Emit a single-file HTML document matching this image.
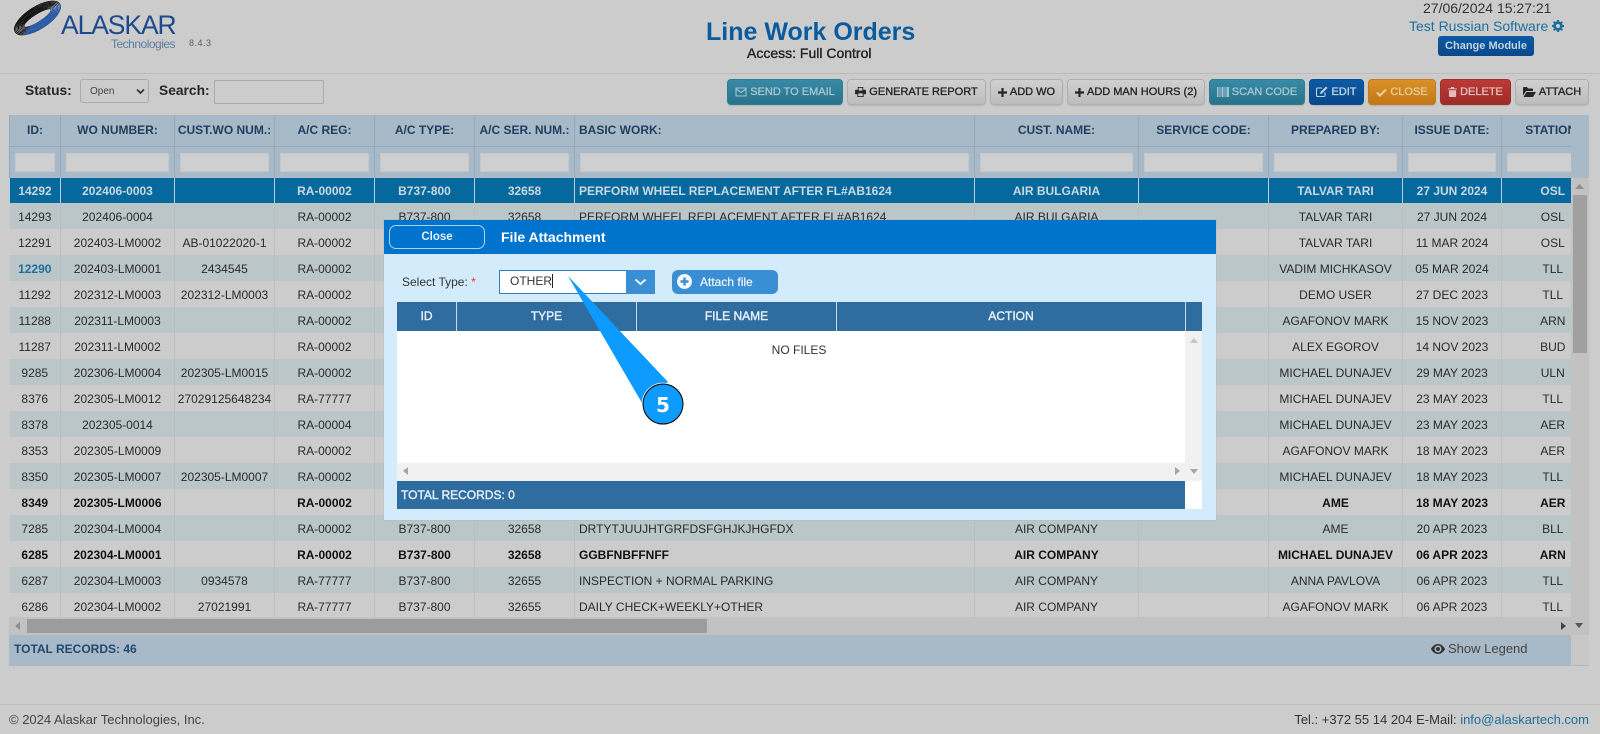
<!DOCTYPE html>
<html lang="en">
<head>
<meta charset="utf-8">
<title>Line Work Orders</title>
<style>
html,body{margin:0;padding:0}
body{width:1600px;height:734px;position:relative;overflow:hidden;background:#cccccc;font-family:"Liberation Sans",Arial,sans-serif;font-size:12px;color:#2a2a2a}
.a{position:absolute;white-space:nowrap}
.line{position:absolute;left:0;width:1600px;height:1px;background:#bdbdbd}
.btn{position:absolute;top:79px;height:26px;box-sizing:border-box;border:1px solid #b0b0b0;border-radius:4px;background:linear-gradient(#d0d0d0,#bdbdbd);color:#262626;font-size:11px;line-height:24px;text-align:center;white-space:nowrap;-webkit-text-stroke:.35px currentColor;box-shadow:0 1px 1px rgba(0,0,0,.12)}
.btn svg{vertical-align:-2px;margin-right:3px}
.teal{background:linear-gradient(#388aa6,#29738b);border-color:#2f7d96;color:#a3c4d0}
.blue{background:linear-gradient(#0b5aa4,#09488a);border-color:#094c8f;color:#c2d2e2}
.orange{background:linear-gradient(#dc9028,#c27816);border-color:#c27c1a;color:#e8cc96}
.red{background:linear-gradient(#bc3a36,#9c2b27);border-color:#a02e2a;color:#e4bdbb}
#tw{position:absolute;left:9px;top:115px;width:1562px;height:502px;overflow:hidden}
table{border-collapse:collapse;table-layout:fixed}
#t{width:1594px}
#t td,#t th{box-sizing:border-box;padding:0;text-align:center;white-space:nowrap;overflow:hidden;border-left:1px solid #bdbdbd;font-weight:normal;font-size:12px}
#t td:first-child,#t th:first-child{border-left:0}
#t .h th{height:31px;background:#a8b9c7;color:#1f3f60;font-weight:bold;border-left:1px solid #93a9bc;border-bottom:1px solid #93a9bc}
#t .f th{height:32px;background:#a8b9c7;border-left:1px solid #93a9bc;vertical-align:middle}
#t .f i{display:block;height:19px;margin:0 5px 0 5px;background:#cfcfcf;border:1px solid #c4c9cd;box-sizing:border-box}
#t tr.r td{height:26px;background:#cccccc;padding-top:2px}
#t tr.r:nth-child(even) td{background:#bac6c8}
#t tr.s td{height:25px;background:#05699e;color:#cbd8e1;font-weight:bold;border-left:1px solid #b9cfdc}
#t tr.b td{font-weight:bold;color:#111}
#t td.l{text-align:left;padding-left:4px}
.mt{position:absolute;top:302px;height:29px;line-height:28px;text-align:center;color:#e6f0f8;font-size:12px;-webkit-text-stroke:.4px #e6f0f8;box-sizing:border-box}
</style>
</head>
<body>

<!-- logo -->
<svg class="a" style="left:10px;top:0" width="56" height="38" viewBox="0 0 56 38">
<defs><linearGradient id="lg" x1="0.3" y1="0" x2="0.7" y2="1"><stop offset="0" stop-color="#000"/><stop offset=".56" stop-color="#1a1a1a"/><stop offset=".7" stop-color="#1b4f9c"/><stop offset="1" stop-color="#1b4f9c"/></linearGradient></defs>
<g fill="none" stroke="url(#lg)" stroke-width=".95" transform="rotate(-32.500 27.500 18)">
<ellipse cx="27.500" cy="18" rx="16" ry="4"/>
<ellipse cx="27.500" cy="18" rx="17.500" ry="5"/>
<ellipse cx="27.500" cy="18" rx="19" ry="6"/>
<ellipse cx="27.500" cy="18" rx="20.500" ry="7"/>
<ellipse cx="27.500" cy="18" rx="22" ry="8"/>
<ellipse cx="27.500" cy="18" rx="23.500" ry="9"/>
<ellipse cx="27.500" cy="18" rx="25" ry="10"/>
<ellipse cx="27.500" cy="18" rx="26.300" ry="11"/>
</g>
</svg>
<div class="a" style="left:61px;top:10px;font-size:26.500px;line-height:30px;color:#1d4a8c;letter-spacing:-1.100px">ALASKAR</div>
<div class="a" style="left:111px;top:37px;font-size:12px;line-height:14px;color:#5f7ca0;letter-spacing:-.5px">Technologies</div>
<div class="a" style="left:189px;top:37px;font-size:9px;line-height:12px;color:#5e5e5e;letter-spacing:.5px">8.4.3</div>

<!-- title -->
<div class="a" style="left:706px;top:17px;font-size:25px;line-height:30px;font-weight:bold;color:#0a5a9e">Line Work Orders</div>
<div class="a" style="left:747px;top:45px;font-size:14px;line-height:16px;color:#222;-webkit-text-stroke:.35px #222">Access: Full Control</div>

<!-- top right -->
<div class="a" style="left:1423px;top:0;font-size:14px;line-height:16px;color:#333">27/06/2024 15:27:21</div>
<div class="a" style="left:1409px;top:18px;font-size:14px;line-height:16px;color:#1f6f9e">Test Russian Software</div>
<svg class="a" style="left:1552px;top:20px" width="12" height="12" viewBox="0 0 12 12"><path fill="#1f6f9e" fill-rule="evenodd" d="M5 0h2l.3 1.600 1.100.5L9.800 1.200l1.100 1.100-.9 1.400.5 1.100L12 5v2l-1.500.3-.5 1.100.9 1.400-1.100 1.100-1.400-.9-1.100.5L7 12H5l-.3-1.500-1.100-.5-1.400.9-1.100-1.100.9-1.400-.5-1.100L0 7V5l1.500-.3.5-1.100-.9-1.400 1.100-1.100 1.400.9 1.100-.5zM6 4a2 2 0 1 0 0 4 2 2 0 0 0 0-4z"/></svg>
<div class="a" style="left:1438px;top:36px;width:96px;height:20px;border-radius:3px;background:linear-gradient(#0b5aa4,#09488a);color:#c4d3e3;font-size:11px;font-weight:bold;line-height:20px;text-align:center">Change Module</div>

<div class="line" style="top:73px"></div>

<!-- toolbar -->
<div class="a" style="left:25px;top:84px;font-size:13.800px;line-height:14px;font-weight:bold;color:#262626">Status:</div>
<div class="a" style="left:80px;top:79px;width:69px;height:24px;box-sizing:border-box;border:1px solid #ababab;border-radius:3px;font-size:10px;line-height:24px;padding-left:9px;color:#444">Open
<svg class="a" style="left:55px;top:8px" width="9" height="7" viewBox="0 0 9 7"><path d="M1 1.500l3.500 3.500L8 1.500" fill="none" stroke="#333" stroke-width="1.700"/></svg></div>
<div class="a" style="left:159px;top:84px;font-size:13.800px;line-height:14px;font-weight:bold;color:#262626">Search:</div>
<div class="a" style="left:214px;top:80px;width:110px;height:24px;box-sizing:border-box;border:1px solid #ababab;border-radius:2px"></div>

<div class="btn teal" style="left:727px;width:116px"><svg width="12" height="10" viewBox="0 0 12 10"><path d="M1 1h10v8H1zM1 2l5 3.500L11 2" fill="none" stroke="currentColor" stroke-width="1.100"/></svg>SEND TO EMAIL</div>
<div class="btn" style="left:847px;width:139px"><svg width="11" height="10" viewBox="0 0 12 11"><path fill="#262626" fill-rule="evenodd" d="M3 0h6v3h2a1 1 0 0 1 1 1v4H9.500v3h-7V8H0V4a1 1 0 0 1 1-1h2zm1 1v3h4V1zM3.500 7v3h5V7z"/></svg>GENERATE REPORT</div>
<div class="btn" style="left:990px;width:73px"><svg width="9" height="9" viewBox="0 0 10 10"><path fill="#262626" d="M3.800 0h2.400v3.800H10v2.400H6.200V10H3.800V6.200H0V3.800h3.800z"/></svg>ADD WO</div>
<div class="btn" style="left:1067px;width:138px"><svg width="9" height="9" viewBox="0 0 10 10"><path fill="#262626" d="M3.800 0h2.400v3.800H10v2.400H6.200V10H3.800V6.200H0V3.800h3.800z"/></svg>ADD MAN HOURS (2)</div>
<div class="btn teal" style="left:1209px;width:96px"><svg width="12" height="10" viewBox="0 0 12 10"><path fill="currentColor" d="M0 0h1.500v10H0zM2.500 0h1v10h-1zM4.500 0h2v10h-2zM7.500 0h1v10h-1zM9.500 0H12v10H9.500z"/></svg>SCAN CODE</div>
<div class="btn blue" style="left:1309px;width:55px"><svg width="12" height="11" viewBox="0 0 12 11"><path fill="none" stroke="currentColor" stroke-width="1.100" d="M9 6.500V9.500a1 1 0 0 1-1 1H1.500a1 1 0 0 1-1-1V3a1 1 0 0 1 1-1H6"/><path fill="currentColor" d="M10 .5 11.500 2 6 7.500 4 8l.5-2z"/></svg>EDIT</div>
<div class="btn orange" style="left:1368px;width:68px"><svg width="11" height="9" viewBox="0 0 11 9"><path d="M1 4.500l3 3L10 1.500" fill="none" stroke="currentColor" stroke-width="2.200"/></svg>CLOSE</div>
<div class="btn red" style="left:1440px;width:71px"><svg width="9" height="10" viewBox="0 0 10 11"><path fill="currentColor" d="M3.500 0h3l.5 1.500h3v1H0v-1h3zM1 3.500h8V10a1 1 0 0 1-1 1H2a1 1 0 0 1-1-1z"/></svg>DELETE</div>
<div class="btn" style="left:1515px;width:74px"><svg width="13" height="10" viewBox="0 0 13 10"><path fill="#262626" d="M0 1a1 1 0 0 1 1-1h3l1 1.500h4a1 1 0 0 1 1 1V4H3L0 8.500zM3.500 5H13l-3 5H.5z"/></svg>ATTACH</div>

<!-- main grid -->
<div class="a" style="left:1571px;top:115px;width:18px;height:63px;background:#a8b9c7"></div>
<div id="tw">
<table id="t">
<colgroup><col style="width:51px"><col style="width:114px"><col style="width:100px"><col style="width:100px"><col style="width:100px"><col style="width:100px"><col style="width:400px"><col style="width:164px"><col style="width:130px"><col style="width:134px"><col style="width:99px"><col style="width:102px"></colgroup>
<thead>
<tr class="h"><th>ID:</th><th>WO NUMBER:</th><th>CUST.WO NUM.:</th><th>A/C REG:</th><th>A/C TYPE:</th><th>A/C SER. NUM.:</th><th class="l" style="text-align:left;padding-left:4px">BASIC WORK:</th><th>CUST. NAME:</th><th>SERVICE CODE:</th><th>PREPARED BY:</th><th>ISSUE DATE:</th><th>STATION:</th></tr>
<tr class="f"><th><i></i></th><th><i></i></th><th><i></i></th><th><i></i></th><th><i></i></th><th><i></i></th><th><i></i></th><th><i></i></th><th><i></i></th><th><i></i></th><th><i></i></th><th><i></i></th></tr>
</thead>
<tbody>
<tr class="s"><td>14292</td><td>202406-0003</td><td></td><td>RA-00002</td><td>B737-800</td><td>32658</td><td class="l">PERFORM WHEEL REPLACEMENT AFTER FL#AB1624</td><td>AIR BULGARIA</td><td></td><td>TALVAR TARI</td><td>27 JUN 2024</td><td>OSL</td></tr>
<tr class="r"><td>14293</td><td>202406-0004</td><td></td><td>RA-00002</td><td>B737-800</td><td>32658</td><td class="l">PERFORM WHEEL REPLACEMENT AFTER FL#AB1624</td><td>AIR BULGARIA</td><td></td><td>TALVAR TARI</td><td>27 JUN 2024</td><td>OSL</td></tr>
<tr class="r"><td>12291</td><td>202403-LM0002</td><td>AB-01022020-1</td><td>RA-00002</td><td></td><td></td><td></td><td></td><td></td><td>TALVAR TARI</td><td>11 MAR 2024</td><td>OSL</td></tr>
<tr class="r"><td style="color:#1f6f9e;font-weight:bold">12290</td><td>202403-LM0001</td><td>2434545</td><td>RA-00002</td><td></td><td></td><td></td><td></td><td></td><td>VADIM MICHKASOV</td><td>05 MAR 2024</td><td>TLL</td></tr>
<tr class="r"><td>11292</td><td>202312-LM0003</td><td>202312-LM0003</td><td>RA-00002</td><td></td><td></td><td></td><td></td><td></td><td>DEMO USER</td><td>27 DEC 2023</td><td>TLL</td></tr>
<tr class="r"><td>11288</td><td>202311-LM0003</td><td></td><td>RA-00002</td><td></td><td></td><td></td><td></td><td></td><td>AGAFONOV MARK</td><td>15 NOV 2023</td><td>ARN</td></tr>
<tr class="r"><td>11287</td><td>202311-LM0002</td><td></td><td>RA-00002</td><td></td><td></td><td></td><td></td><td></td><td>ALEX EGOROV</td><td>14 NOV 2023</td><td>BUD</td></tr>
<tr class="r"><td>9285</td><td>202306-LM0004</td><td>202305-LM0015</td><td>RA-00002</td><td></td><td></td><td></td><td></td><td></td><td>MICHAEL DUNAJEV</td><td>29 MAY 2023</td><td>ULN</td></tr>
<tr class="r"><td>8376</td><td>202305-LM0012</td><td>27029125648234</td><td>RA-77777</td><td></td><td></td><td></td><td></td><td></td><td>MICHAEL DUNAJEV</td><td>23 MAY 2023</td><td>TLL</td></tr>
<tr class="r"><td>8378</td><td>202305-0014</td><td></td><td>RA-00004</td><td></td><td></td><td></td><td></td><td></td><td>MICHAEL DUNAJEV</td><td>23 MAY 2023</td><td>AER</td></tr>
<tr class="r"><td>8353</td><td>202305-LM0009</td><td></td><td>RA-00002</td><td></td><td></td><td></td><td></td><td></td><td>AGAFONOV MARK</td><td>18 MAY 2023</td><td>AER</td></tr>
<tr class="r"><td>8350</td><td>202305-LM0007</td><td>202305-LM0007</td><td>RA-00002</td><td></td><td></td><td></td><td></td><td></td><td>MICHAEL DUNAJEV</td><td>18 MAY 2023</td><td>TLL</td></tr>
<tr class="r b"><td>8349</td><td>202305-LM0006</td><td></td><td>RA-00002</td><td></td><td></td><td></td><td></td><td></td><td>AME</td><td>18 MAY 2023</td><td>AER</td></tr>
<tr class="r"><td>7285</td><td>202304-LM0004</td><td></td><td>RA-00002</td><td>B737-800</td><td>32658</td><td class="l">DRTYTJUUJHTGRFDSFGHJKJHGFDX</td><td>AIR COMPANY</td><td></td><td>AME</td><td>20 APR 2023</td><td>BLL</td></tr>
<tr class="r b"><td>6285</td><td>202304-LM0001</td><td></td><td>RA-00002</td><td>B737-800</td><td>32658</td><td class="l">GGBFNBFFNFF</td><td>AIR COMPANY</td><td></td><td>MICHAEL DUNAJEV</td><td>06 APR 2023</td><td>ARN</td></tr>
<tr class="r"><td>6287</td><td>202304-LM0003</td><td>0934578</td><td>RA-77777</td><td>B737-800</td><td>32655</td><td class="l">INSPECTION + NORMAL PARKING</td><td>AIR COMPANY</td><td></td><td>ANNA PAVLOVA</td><td>06 APR 2023</td><td>TLL</td></tr>
<tr class="r"><td>6286</td><td>202304-LM0002</td><td>27021991</td><td>RA-77777</td><td>B737-800</td><td>32655</td><td class="l">DAILY CHECK+WEEKLY+OTHER</td><td>AIR COMPANY</td><td></td><td>AGAFONOV MARK</td><td>06 APR 2023</td><td>TLL</td></tr>
</tbody>
</table>
</div>

<!-- vertical scrollbar -->
<div class="a" style="left:1571px;top:178px;width:18px;height:457px;background:#c2c2c2"></div>
<div class="a" style="left:1573px;top:195px;width:14px;height:158px;background:#a0a0a0"></div>
<svg class="a" style="left:1575px;top:184px" width="9" height="6"><path d="M4.500 0 9 5H0z" fill="#8e8e8e"/></svg>
<svg class="a" style="left:1575px;top:623px" width="9" height="6"><path d="M0 0h8L4 5z" fill="#555"/></svg>
<!-- horizontal scrollbar -->
<div class="a" style="left:9px;top:617px;width:1562px;height:18px;background:#c2c2c2"></div>
<div class="a" style="left:27px;top:619px;width:680px;height:14px;background:#9c9c9c"></div>
<svg class="a" style="left:15px;top:622px" width="6" height="9"><path d="M5 0v8L0 4z" fill="#8e8e8e"/></svg>
<svg class="a" style="left:1561px;top:622px" width="6" height="9"><path d="M0 0v8l5-4z" fill="#444"/></svg>
<!-- grid footer -->
<div class="a" style="left:9px;top:635px;width:1562px;height:31px;background:#a8b9c7;border-bottom:1px solid #b5b5b5;box-sizing:border-box"></div>
<div class="a" style="left:1571px;top:635px;width:18px;height:31px;background:#c8c8c8;border-bottom:1px solid #b5b5b5;box-sizing:border-box"></div>
<div class="a" style="left:14px;top:642px;font-size:12px;line-height:14px;font-weight:bold;color:#1f4a70">TOTAL RECORDS: 46</div>
<svg class="a" style="left:1431px;top:644px" width="14" height="10" viewBox="0 0 14 10"><path fill="#333" fill-rule="evenodd" d="M7 0c3 0 5.500 2 7 5-1.500 3-4 5-7 5S1.500 8 0 5c1.500-3 4-5 7-5zm0 1.500A3.500 3.500 0 1 0 7 8.500a3.500 3.500 0 0 0 0-7zM7 3a2 2 0 1 1 0 4 2 2 0 0 1 0-4z"/></svg>
<div class="a" style="left:1448px;top:642px;font-size:13px;line-height:14px;color:#444">Show Legend</div>

<!-- page footer -->
<div class="line" style="top:704px"></div>
<div class="a" style="left:9px;top:713px;font-size:13px;line-height:14px;color:#444">© 2024 Alaskar Technologies, Inc.</div>
<div class="a" style="right:11px;top:713px;font-size:13px;line-height:14px;color:#333">Tel.: +372 55 14 204 E-Mail: <span style="color:#1f6f9e">info@alaskartech.com</span></div>

<!-- modal -->
<div class="a" style="left:384px;top:220px;width:832px;height:300px;background:#d4ebfb;box-shadow:0 0 1px rgba(0,0,0,.15)"></div>
<div class="a" style="left:384px;top:220px;width:832px;height:34px;background:#0074cc"></div>
<div class="a" style="left:389px;top:225px;width:96px;height:24px;box-sizing:border-box;border:1px solid #a9d4f2;border-radius:7px;color:#e4f1fb;font-size:11.500px;font-weight:bold;line-height:23px;text-align:center">Close</div>
<div class="a" style="left:501px;top:229px;font-size:14px;line-height:17px;font-weight:bold;color:#fff">File Attachment</div>

<div class="a" style="left:402px;top:275px;font-size:12px;line-height:14px;color:#333">Select Type: <span style="color:#e33">*</span></div>
<div class="a" style="left:499px;top:270px;width:127px;height:24px;box-sizing:border-box;background:#fff;border:1px solid #2f7fb8;border-right:0;font-size:12px;line-height:21px;padding-left:10px;color:#333">OTHER<span style="display:inline-block;width:1px;height:14px;background:#222;vertical-align:-3px"></span></div>
<div class="a" style="left:626px;top:270px;width:29px;height:24px;background:#3a8fd4"></div>
<svg class="a" style="left:634px;top:278px" width="13" height="8" viewBox="0 0 13 8"><path d="M1.500 1.500l5 4.500 5-4.500" fill="none" stroke="#e6f2fb" stroke-width="2"/></svg>
<div class="a" style="left:672px;top:270px;width:106px;height:24px;border-radius:6px;background:#3a8fd4"></div>
<svg class="a" style="left:677px;top:274px" width="15" height="15" viewBox="0 0 15 15"><circle cx="7.500" cy="7.500" r="7.500" fill="#f2f8fd"/><path d="M6.300 3.500h2.400v2.800h2.800v2.400H8.700v2.800H6.300V8.700H3.500V6.300h2.800z" fill="#3a8fd4"/></svg>
<div class="a" style="left:700px;top:275px;font-size:12px;line-height:14px;color:#eef6fc;-webkit-text-stroke:.2px #eef6fc">Attach file</div>

<div class="a" style="left:397px;top:302px;width:805px;height:207px;background:#fff"></div>
<div class="a" style="left:397px;top:302px;width:805px;height:29px;background:#2f6ca0"></div>
<div class="mt" style="left:397px;width:59px">ID</div>
<div class="mt" style="left:456px;width:180px;border-left:1px solid #c7dbea">TYPE</div>
<div class="mt" style="left:636px;width:200px;border-left:1px solid #c7dbea">FILE NAME</div>
<div class="mt" style="left:836px;width:349px;border-left:1px solid #c7dbea">ACTION</div>
<div class="a" style="left:1185px;top:302px;width:1px;height:29px;background:#c7dbea"></div>
<div class="a" style="left:799px;top:343px;transform:translateX(-50%);font-size:12px;line-height:14px;color:#333">NO FILES</div>

<div class="a" style="left:1185px;top:331px;width:17px;height:150px;background:#f1f1f1"></div>
<div class="a" style="left:397px;top:463px;width:788px;height:18px;background:#f1f1f1"></div>
<svg class="a" style="left:1190px;top:338px" width="8" height="5"><path d="M4 0l4 5H0z" fill="#c4c4c4"/></svg>
<svg class="a" style="left:1190px;top:469px" width="8" height="5"><path d="M0 0h8L4 5z" fill="#a5a5a5"/></svg>
<svg class="a" style="left:403px;top:467px" width="5" height="9"><path d="M5 0v8L0 4z" fill="#a5a5a5"/></svg>
<svg class="a" style="left:1175px;top:467px" width="5" height="9"><path d="M0 0v8l5-4z" fill="#a5a5a5"/></svg>
<div class="a" style="left:397px;top:481px;width:788px;height:28px;background:#2f6ca0"></div>
<div class="a" style="left:401px;top:488px;font-size:12px;line-height:14px;color:#e6f0f8;-webkit-text-stroke:.4px #e6f0f8">TOTAL RECORDS: 0</div>

<!-- callout -->
<svg class="a" style="left:560px;top:268px;overflow:visible" width="130" height="160" viewBox="560 268 130 160">
<path d="M568 276 642 403 668 382z" fill="#0d9bff"/>
<circle cx="663" cy="404" r="20" fill="#0d9bff" stroke="#111" stroke-width="1.200"/>
<circle cx="663" cy="404" r="21" fill="none" stroke="#fff" stroke-width=".8"/>
<text x="663" y="412" text-anchor="middle" font-family="'DejaVu Sans',sans-serif" font-weight="bold" font-size="20" fill="#fff">5</text>
</svg>

</body>
</html>
